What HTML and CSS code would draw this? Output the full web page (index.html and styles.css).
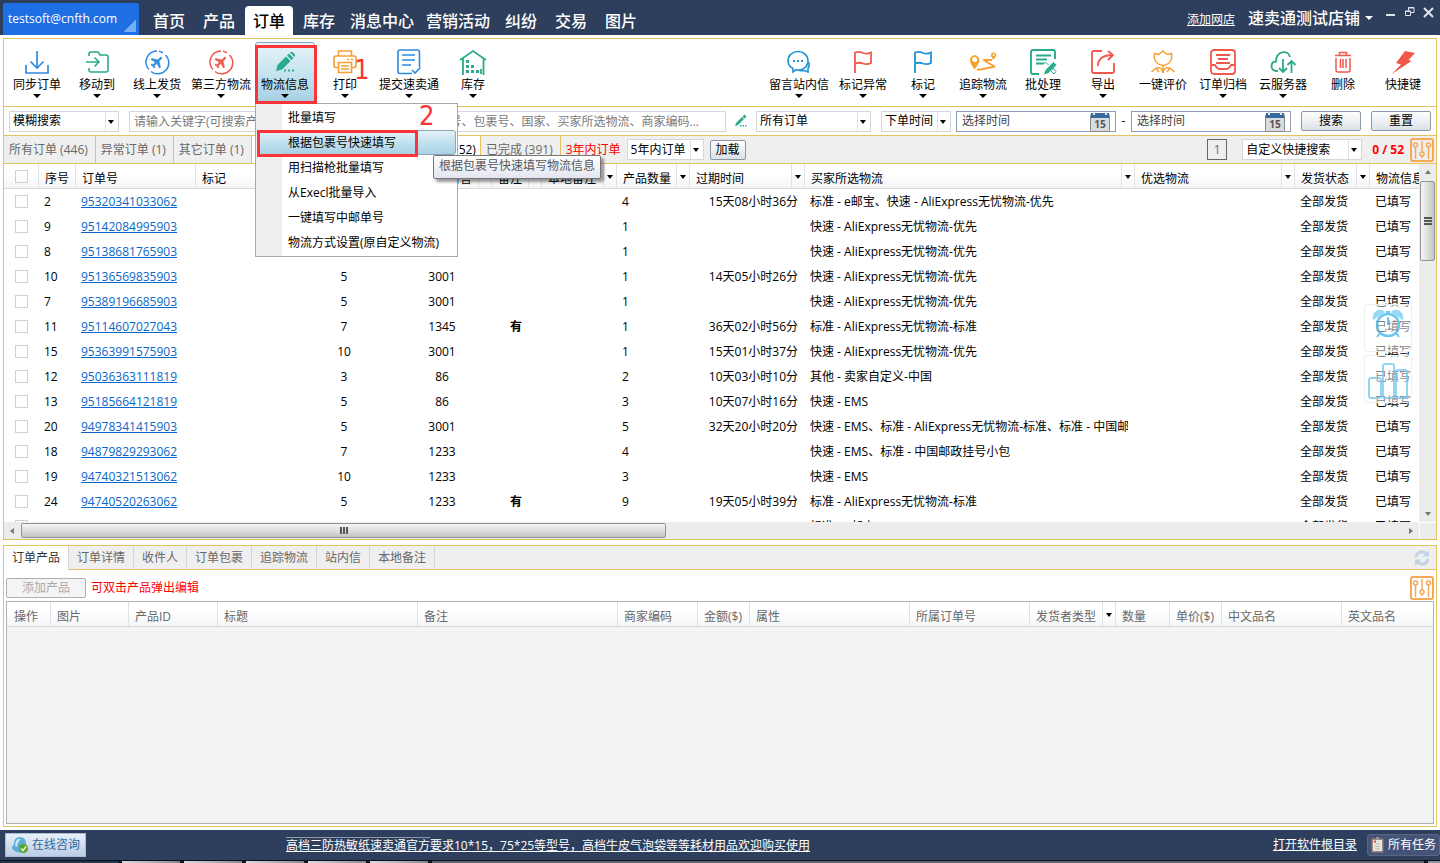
FILE: index.html
```html
<!DOCTYPE html>
<html lang="zh-CN">
<head>
<meta charset="utf-8">
<title>订单管理</title>
<link rel="stylesheet" href="styles.css">
</head>
<body>
<header class="topbar">
  <button class="account">testsoft@cnfth.com</button>
  <nav class="mainnav">
    <a href="#">首页</a><a href="#">产品</a><a href="#" class="active">订单</a><a href="#">库存</a><a href="#">消息中心</a><a href="#">营销活动</a><a href="#">纠纷</a><a href="#">交易</a><a href="#">图片</a>
  </nav>
  <a class="add-shop" href="#">添加网店</a>
  <button class="shop">速卖通测试店铺<i class="tri light"></i></button>
  <div class="winctl">
    <button aria-label="最小化"><svg width="11" height="12" viewBox="0 0 11 12"><path d="M1 9h9" stroke="#dfe3ea" stroke-width="2"/></svg></button>
    <button aria-label="还原"><svg width="11" height="12" viewBox="0 0 11 12" fill="none" stroke="#dfe3ea"><path d="M4.500 5V1.500h5.500v5H7M4 2h6"/><path d="M1.500 5.500h5v4h-5zM1 5h6"/></svg></button>
    <button aria-label="关闭"><svg width="11" height="12" viewBox="0 0 11 12"><path d="M1 2l9 9M10 2l-9 9" stroke="#dfe3ea" stroke-width="2"/></svg></button>
  </div>
</header>

<main class="workspace">
  <section class="panel orders">
    <div class="toolbar">
      <button class="tool"><svg viewBox="0 0 28 28" fill="none" stroke="#2e8be0" stroke-width="2"><path d="M3 17v8h22v-8M14 3v17M7.500 13.500l6.500 6.500 6.500-6.500" stroke-width="1.700"/></svg><span>同步订单</span><i class="tri"></i></button>
      <button class="tool"><svg viewBox="0 0 28 28" fill="none" stroke="#2bab8c" stroke-width="1.600"><path d="M6 8V6q0-2 2-2h7l2 3h6q2 0 2 2v13q0 2-2 2H8q-2 0-2-2v-2M3 14h13M11.500 9.500l4.500 4.500-4.500 4.500"/></svg><span>移动到</span><i class="tri"></i></button>
      <button class="tool"><svg viewBox="0 0 28 28" fill="none" stroke="#2e8be0" stroke-width="1.500"><path d="M14 3a11 11 0 0 0-8 18.500M8 23.500A11 11 0 0 0 22.500 7M16 3.200a11 11 0 0 1 4 1.600"/><path transform="translate(14 14) rotate(45) scale(.64) translate(-11.500 -12)" d="M21 16v-2l-8-5V3.500c0-.83-.67-1.500-1.500-1.500S10 2.670 10 3.500V9l-8 5v2l8-2.500V19l-2 1.500V22l3.500-1 3.500 1v-1.500L13 19v-5.500l8 2.500z" fill="#2e8be0" stroke-width="1"/></svg><span>线上发货</span><i class="tri"></i></button>
      <button class="tool wide"><svg viewBox="0 0 28 28" fill="none" stroke="#f0584b" stroke-width="1.500"><path d="M14 3a11 11 0 0 0-8 18.500M8 23.500A11 11 0 0 0 22.500 7M16 3.200a11 11 0 0 1 4 1.600"/><path transform="translate(14 14) rotate(45) scale(.64) translate(-11.500 -12)" d="M21 16v-2l-8-5V3.500c0-.83-.67-1.500-1.500-1.500S10 2.670 10 3.500V9l-8 5v2l8-2.500V19l-2 1.500V22l3.500-1 3.500 1v-1.500L13 19v-5.500l8 2.500z" fill="#f0584b" stroke-width="1"/></svg><span>第三方物流</span><i class="tri"></i></button>
      <div class="tool-slot">
        <button class="tool pressed"><svg viewBox="0 0 28 28" fill="#2bab8c"><path d="M5 23l1.500-6L15 8.500l4.500 4.500L11 21.500zM16 7.500l2-2 4.500 4.500-2 2zM19 4.500q1.500-1.500 3 0l1.500 1.500q1.500 1.500 0 3z"/><path d="M13 21.500h2v2h-2zM17 21.500h2v2h-2zM21 21.500h2v2h-2z"/></svg><span>物流信息</span><i class="tri"></i></button>
        <div class="mark mark-tool"></div>
        <div class="menu">
          <button>批量填写</button>
          <button class="hot">根据包裹号快速填写</button>
          <button>用扫描枪批量填写</button>
          <button>从Execl批量导入</button>
          <button>一键填写中邮单号</button>
          <button>物流方式设置(原自定义物流)</button>
          <div class="mark mark-item"></div>
          <b class="step step-two">2</b>
          <div class="tip">根据包裹号快速填写物流信息</div>
        </div>
      </div>
      <div class="tool-slot">
        <button class="tool"><svg viewBox="0 0 28 28" fill="none" stroke="#f5a030" stroke-width="1.600"><path d="M7.500 8V3h13v5M7 19.500H5q-2 0-2-2V10q0-2 2-2h18q2 0 2 2v7.500q0 2-2 2h-2M7.500 14.500h13v10h-13zM10 18h8M10 21h8M19.500 11.500h3M16 11.500h2"/></svg><span>打印</span><i class="tri"></i></button>
        <b class="step step-one">1</b>
      </div>
      <button class="tool wide"><svg viewBox="0 0 28 28" fill="none" stroke="#2e8be0" stroke-width="1.600"><path d="M17 25.500H5q-2 0-2-2V4q0-2 2-2h17.500q2 0 2 2v15M7 7h13M7 12h13M7 17h9"/><path d="M17 22l3 3 5.500-5.500"/></svg><span>提交速卖通</span><i class="tri"></i></button>
      <button class="tool"><svg viewBox="0 0 28 28" fill="none" stroke="#2bab8c" stroke-width="1.800"><path d="M1 12L14 3l13 9M4 10v17M24.500 10v17"/><path d="M7 12h3v3H7zM7 17h3v3H7zM7 22h3v3H7zM12 17h3v3h-3zM12 22h3v3h-3zM17 22h3v3h-3z" fill="#2bab8c" stroke="none"/><path d="M22 21v5"/></svg><span>库存</span><i class="tri"></i></button>
      <div class="grow"></div>
      <button class="tool wide"><svg viewBox="0 0 28 28" fill="none" stroke="#1f94d8" stroke-width="1.600"><path d="M8 24v-3.500C4.500 18.500 3 16 3 13 3 7.500 7.500 3.500 13 3.500S23 7.500 23 13s-4.500 9-10 9q-1 0-2-.3z"/><path d="M23.500 14c1.500 3 .5 5-.5 6.500v3.500l-3.500-1.500q-3 .8-6-.5"/><path d="M8 12h2v2H8zM12 12h2v2h-2zM16 12h2v2h-2z" fill="#1f94d8" stroke="none"/></svg><span>留言站内信</span><i class="tri"></i></button>
      <button class="tool"><svg viewBox="0 0 28 28" fill="none" stroke="#f0584b" stroke-width="1.800"><path d="M6 25V4.500q4-1.500 8 .5 4 1.500 8-.5V15q-4 2-8 .5t-8 0"/></svg><span>标记异常</span><i class="tri"></i></button>
      <button class="tool"><svg viewBox="0 0 28 28" fill="none" stroke="#1f94d8" stroke-width="1.800"><path d="M6 25V4.500q4-1.500 8 .5 4 1.500 8-.5V15q-4 2-8 .5t-8 0"/></svg><span>标记</span><i class="tri"></i></button>
      <button class="tool"><svg viewBox="0 0 28 28" fill="#f5a030" fill-rule="evenodd"><path d="M5.500 21.500C2.500 17 1 15 1 12a4.700 4.700 0 0 1 9.400 0c0 3-1.500 5-4.900 9.500zM5.600 9a2.500 2.500 0 1 0 .1 5 2.500 2.500 0 0 0-.1-5z"/><path d="M24.500 12C23 10 22 8.500 22 7a2.600 2.600 0 0 1 5.200 0c0 1.500-1.200 3-2.700 5zM24.600 6a1 1 0 1 0 .1 2 1 1 0 0 0-.1-2z"/><path d="M8 21.500h4l13.500-3-11-6.500H23" fill="none" stroke="#f5a030" stroke-width="1.800" stroke-linejoin="round"/></svg><span>追踪物流</span><i class="tri"></i></button>
      <button class="tool"><svg viewBox="0 0 28 28" fill="none" stroke="#2bab8c" stroke-width="1.900"><path d="M26 11V4q0-2-2-2H4Q2 2 2 4v20q0 2 2 2h6M7 7.500h15M7 11.500h11M7 15.500h8"/><path d="M14.500 16l2-2 3 3M22 21l3 0 2 2.500-2 2.500-3-3" stroke-width="1"/><path d="M15 26.500l1.500-4.500 8-8 3 3-8 8z" fill="#2bab8c" stroke="none"/></svg><span>批处理</span><i class="tri"></i></button>
      <button class="tool"><svg viewBox="0 0 28 28" fill="none" stroke="#f0584b" stroke-width="1.800"><path d="M13 3H5Q3 3 3 5v18q0 2 2 2h18q2 0 2-2v-8M9 18C9 11 14 7 24 7M19 3l5 4-5 5"/></svg><span>导出</span><i class="tri"></i></button>
      <button class="tool"><svg viewBox="0 0 28 28" fill="none" stroke="#f5a030" stroke-width="1.500"><path d="M10 6.500L14 3l4 3.500 4.500-1c1 5-.5 11-8.500 12C6 16.500 4.500 10.500 5.500 5.500zM14 17.500V25M14 25q-1-6-6-5M14 25q1-6 6-5M2.500 24l4.500-4 3 4M25.500 24L21 20l-3 4"/></svg><span>一键评价</span></button>
      <button class="tool"><svg viewBox="0 0 28 28" fill="none" stroke="#f0584b" stroke-width="1.800"><rect x="2" y="2" width="24" height="24" rx="3"/><path d="M7 7h14M9 11h10M7 15h14M2 17h4q2 4 5 4h6q3 0 5-4h4"/></svg><span>订单归档</span><i class="tri"></i></button>
      <button class="tool"><svg viewBox="0 0 28 28" fill="none" stroke="#2bab8c" stroke-width="1.800"><path d="M9 23H7c-6-1-6-9 0-9.500C7 3 19 1 21 9M14 11v13M10 20l4 4 4-4M22.500 25V13M18.500 17l4-4 4 4"/></svg><span>云服务器</span><i class="tri"></i></button>
      <button class="tool"><svg viewBox="0 0 28 28" fill="none" stroke="#f0584b" stroke-width="1.500"><path d="M6 7.500h16M10.500 7V4.500h7V7M7 10v12q0 2 2 2h10q2 0 2-2V10M11.500 11v9M14 11v9M17 11v9"/></svg><span>删除</span></button>
      <button class="tool"><svg viewBox="0 0 28 28" fill="#f0584b"><path d="M16 3l10 2-6.500 7 3 1L3 26l9-9.500-5-1.500z"/></svg><span>快捷键</span></button>
    </div>

    <form class="searchbar">
      <span class="combo w110"><select aria-label="搜索方式"><option>模糊搜索</option></select></span>
      <input class="keyword" type="text" aria-label="关键字" placeholder="请输入关键字(可搜索产品标题、商家编码、订单备注、订单号、包裹号、国家、买家所选物流、商家编码...">
      <button type="button" class="edit" aria-label="编辑"><svg width="14" height="14" viewBox="0 0 14 14" fill="#2bab8c"><path d="M1 12l1-3 6-6 2 2-6 6zM8.500 2.500l2-2 2 2-2 2zM6 11h1.500v1.500H6zM8.500 11H10v1.500H8.500zM11 11h1.500v1.500H11z"/></svg></button>
      <span class="combo w115"><select aria-label="订单范围"><option>所有订单</option></select></span>
      <span class="combo w70"><select aria-label="时间类型"><option>下单时间</option></select></span>
      <span class="date"><input type="text" value="选择时间" aria-label="开始时间"><svg width="20" height="20" viewBox="0 0 20 20"><rect x=".5" y="2.500" width="19" height="17" rx="1" fill="#d9dcdf" stroke="#85898e"/><rect x="1" y="1" width="18" height="5" fill="#37699c"/><path d="M4 0v3M16 0v3" stroke="#d5e6f5" stroke-width="2"/><text x="10" y="16" text-anchor="middle" font-size="10" font-weight="700" fill="#555">15</text></svg></span>
      <span class="dash">-</span>
      <span class="date"><input type="text" value="选择时间" aria-label="结束时间"><svg width="20" height="20" viewBox="0 0 20 20"><rect x=".5" y="2.500" width="19" height="17" rx="1" fill="#d9dcdf" stroke="#85898e"/><rect x="1" y="1" width="18" height="5" fill="#37699c"/><path d="M4 0v3M16 0v3" stroke="#d5e6f5" stroke-width="2"/><text x="10" y="16" text-anchor="middle" font-size="10" font-weight="700" fill="#555">15</text></svg></span>
      <button type="button" class="btn w60">搜索</button>
      <button type="button" class="btn w60">重置</button>
    </form>

    <div class="filters">
      <button class="ftab">所有订单 (446)</button>
      <button class="ftab">异常订单 (1)</button>
      <button class="ftab">其它订单 (1)</button>
      <button class="ftab current">(52)</button>
      <button class="ftab">已完成 (391)</button>
      <span class="within">3年内订单</span>
      <span class="combo w77"><select aria-label="年限"><option>5年内订单</option></select></span>
      <button class="btn load">加载</button>
      <div class="grow"></div>
      <button class="page">1</button>
      <span class="combo w120"><select aria-label="快捷搜索"><option>自定义快捷搜索</option></select></span>
      <span class="count">0 / 52</span>
      <button class="sliders" aria-label="列设置"><svg width="24" height="24" viewBox="0 0 24 24" fill="none" stroke="#f5a957" stroke-width="1.500"><rect x="1" y="1" width="22" height="22" rx="2" stroke-width="2"/><path d="M5.500 9v12M12 3v11M12 18v2M18.500 9v12"/><circle cx="5.500" cy="7" r="2"/><circle cx="12" cy="16" r="2"/><circle cx="18.500" cy="7" r="2"/></svg></button>
    </div>

    <div class="gridwrap">
      <div class="viewport">
        <table class="grid">
          <colgroup><col class="c34"><col class="c37"><col class="c120"><col class="c100"><col class="c98"><col class="c98"><col class="c50"><col class="c75"><col class="c73"><col class="c115"><col class="c330"><col class="c160"><col class="c75"><col></colgroup>
          <thead><tr>
            <th class="ck"><input type="checkbox" aria-label="全选"></th><th><div>序号</div></th><th><div>订单号</div></th><th><div>标记</div></th><th></th><th><div class="end">留言<i class="flt"></i></div></th><th><div>备注<i class="flt"></i></div></th><th><div>本地备注<i class="flt"><i class="tri sm"></i></i></div></th><th><div>产品数量<i class="flt"><i class="tri sm"></i></i></div></th><th><div>过期时间<i class="flt"><i class="tri sm"></i></i></div></th><th><div>买家所选物流<i class="flt"><i class="tri sm"></i></i></div></th><th><div>优选物流<i class="flt"><i class="tri sm"></i></i></div></th><th><div>发货状态<i class="flt"><i class="tri sm"></i></i></div></th><th><div>物流信息</div></th>
          </tr></thead>
          <tbody>
<tr><td class="ck"><input type="checkbox" aria-label="选择"></td><td>2</td><td><a href="#">95320341033062</a></td><td></td><td></td><td></td><td></td><td></td><td>4</td><td class="r">15天08小时36分</td><td>标准 - e邮宝、快速 - AliExpress无忧物流-优先</td><td></td><td>全部发货</td><td>已填写</td></tr>
<tr><td class="ck"><input type="checkbox" aria-label="选择"></td><td>9</td><td><a href="#">95142084995903</a></td><td></td><td></td><td></td><td></td><td></td><td>1</td><td></td><td>快速 - AliExpress无忧物流-优先</td><td></td><td>全部发货</td><td>已填写</td></tr>
<tr><td class="ck"><input type="checkbox" aria-label="选择"></td><td>8</td><td><a href="#">95138681765903</a></td><td></td><td></td><td></td><td></td><td></td><td>1</td><td></td><td>快速 - AliExpress无忧物流-优先</td><td></td><td>全部发货</td><td>已填写</td></tr>
<tr><td class="ck"><input type="checkbox" aria-label="选择"></td><td>10</td><td><a href="#">95136569835903</a></td><td></td><td class="m">5</td><td class="m">3001</td><td></td><td></td><td>1</td><td class="r">14天05小时26分</td><td>快速 - AliExpress无忧物流-优先</td><td></td><td>全部发货</td><td>已填写</td></tr>
<tr><td class="ck"><input type="checkbox" aria-label="选择"></td><td>7</td><td><a href="#">95389196685903</a></td><td></td><td class="m">5</td><td class="m">3001</td><td></td><td></td><td>1</td><td></td><td>快速 - AliExpress无忧物流-优先</td><td></td><td>全部发货</td><td>已填写</td></tr>
<tr><td class="ck"><input type="checkbox" aria-label="选择"></td><td>11</td><td><a href="#">95114607027043</a></td><td></td><td class="m">7</td><td class="m">1345</td><td class="m"><b>有</b></td><td></td><td>1</td><td class="r">36天02小时56分</td><td>标准 - AliExpress无忧物流-标准</td><td></td><td>全部发货</td><td>已填写</td></tr>
<tr><td class="ck"><input type="checkbox" aria-label="选择"></td><td>15</td><td><a href="#">95363991575903</a></td><td></td><td class="m">10</td><td class="m">3001</td><td></td><td></td><td>1</td><td class="r">15天01小时37分</td><td>快速 - AliExpress无忧物流-优先</td><td></td><td>全部发货</td><td>已填写</td></tr>
<tr><td class="ck"><input type="checkbox" aria-label="选择"></td><td>12</td><td><a href="#">95036363111819</a></td><td></td><td class="m">3</td><td class="m">86</td><td></td><td></td><td>2</td><td class="r">10天03小时10分</td><td>其他 - 卖家自定义-中国</td><td></td><td>全部发货</td><td>已填写</td></tr>
<tr><td class="ck"><input type="checkbox" aria-label="选择"></td><td>13</td><td><a href="#">95185664121819</a></td><td></td><td class="m">5</td><td class="m">86</td><td></td><td></td><td>3</td><td class="r">10天07小时16分</td><td>快速 - EMS</td><td></td><td>全部发货</td><td>已填写</td></tr>
<tr><td class="ck"><input type="checkbox" aria-label="选择"></td><td>20</td><td><a href="#">94978341415903</a></td><td></td><td class="m">5</td><td class="m">3001</td><td></td><td></td><td>5</td><td class="r">32天20小时20分</td><td><div class="clip">快速 - EMS、标准 - AliExpress无忧物流-标准、标准 - 中国邮政挂号小包</div></td><td></td><td>全部发货</td><td>已填写</td></tr>
<tr><td class="ck"><input type="checkbox" aria-label="选择"></td><td>18</td><td><a href="#">94879829293062</a></td><td></td><td class="m">7</td><td class="m">1233</td><td></td><td></td><td>4</td><td></td><td>快速 - EMS、标准 - 中国邮政挂号小包</td><td></td><td>全部发货</td><td>已填写</td></tr>
<tr><td class="ck"><input type="checkbox" aria-label="选择"></td><td>19</td><td><a href="#">94740321513062</a></td><td></td><td class="m">10</td><td class="m">1233</td><td></td><td></td><td>3</td><td></td><td>快速 - EMS</td><td></td><td>全部发货</td><td>已填写</td></tr>
<tr><td class="ck"><input type="checkbox" aria-label="选择"></td><td>24</td><td><a href="#">94740520263062</a></td><td></td><td class="m">5</td><td class="m">1233</td><td class="m"><b>有</b></td><td></td><td>9</td><td class="r">19天05小时39分</td><td>标准 - AliExpress无忧物流-标准</td><td></td><td>全部发货</td><td>已填写</td></tr>
<tr><td class="ck"><input type="checkbox" aria-label="选择"></td><td></td><td></td><td></td><td></td><td></td><td></td><td></td><td></td><td></td><td>标准 - e邮宝</td><td></td><td>全部发货</td><td>已填写</td></tr>
          </tbody>
        </table>
        <div class="floats">
          <button aria-label="提醒"><svg width="46" height="46" viewBox="0 0 46 46" fill="none" stroke="#3db3e8" stroke-width="2.500"><path d="M9 13a6 6 0 0 1 9-6zM37 13a6 6 0 0 0-9-6z" fill="#72cdf2" stroke="#72cdf2"/><circle cx="23" cy="20" r="11"/><path d="M23 12v8M21 7h4M15 28l-3 4M31 28l3 4" stroke-width="2"/></svg></button>
          <button aria-label="统计"><svg width="46" height="46" viewBox="0 0 46 46" fill="none" stroke="#72c7ee" stroke-width="2"><rect x="4" y="22" width="12" height="20" rx="2"/><rect x="18" y="8" width="11" height="34" rx="2"/><rect x="31" y="14" width="11" height="28" rx="2"/></svg></button>
        </div>
      </div>
      <div class="vbar"><i class="arr up"></i><div class="vthumb"><i></i><i></i><i></i></div><div class="grow"></div><i class="arr down"></i></div>
      <div class="hbar"><i class="arr left"></i><div class="hthumb"><i></i><i></i><i></i></div><div class="grow"></div><i class="arr right"></i></div>
      <div class="corner"></div>
    </div>
  </section>

  <section class="panel detail">
    <div class="dtabs">
      <button class="current">订单产品</button><button>订单详情</button><button>收件人</button><button>订单包裹</button><button>追踪物流</button><button>站内信</button><button>本地备注</button>
      <div class="grow"></div>
      <svg class="refresh" width="16" height="16" viewBox="0 0 16 16" fill="none" stroke="#c3d3e6" stroke-width="3"><path d="M2 7a6 6 0 0 1 10-3.500M14 9a6 6 0 0 1-10 3.500"/><path d="M15 0v6.500H8.500zM1 16V9.500h6.500z" fill="#c3d3e6" stroke="none"/></svg>
    </div>
    <div class="dtools">
      <button class="btn add" disabled>添加产品</button>
      <span class="hint">可双击产品弹出编辑</span>
      <div class="grow"></div>
      <button class="sliders" aria-label="列设置"><svg width="24" height="24" viewBox="0 0 24 24" fill="none" stroke="#f5a957" stroke-width="1.500"><rect x="1" y="1" width="22" height="22" rx="2" stroke-width="2"/><path d="M5.500 9v12M12 3v11M12 18v2M18.500 9v12"/><circle cx="5.500" cy="7" r="2"/><circle cx="12" cy="16" r="2"/><circle cx="18.500" cy="7" r="2"/></svg></button>
    </div>
    <div class="dgrid">
      <table class="grid muted">
        <colgroup><col class="c43"><col class="c78"><col class="c89"><col class="c200"><col class="c200"><col class="c80"><col class="c52"><col class="c160"><col class="c120"><col class="c86"><col class="c54"><col class="c52"><col class="c120"><col></colgroup>
        <thead><tr><th><div>操作</div></th><th><div>图片</div></th><th><div>产品ID</div></th><th><div>标题</div></th><th><div>备注</div></th><th><div>商家编码</div></th><th><div>金额($)</div></th><th><div>属性</div></th><th><div>所属订单号</div></th><th><div>发货者类型<i class="flt"><i class="tri sm"></i></i></div></th><th><div>数量</div></th><th><div>单价($)</div></th><th><div>中文品名</div></th><th><div>英文品名</div></th></tr></thead>
      </table>
    </div>
  </section>
</main>

<footer class="status">
  <button class="chat"><svg width="18" height="18" viewBox="0 0 18 18"><path d="M2 14Q0 11 3 8q0-7 6-7t6 7q2 3 1 7-7 4-14-1z" fill="#5aaed8"/><path d="M5 5q2-3 5-2-3 2-4 8-3 0-1-6z" fill="#c8e8f5"/><circle cx="12.500" cy="12.500" r="4.500" fill="#5ba22c"/><path d="M10 12.500l2 2 3-4" fill="none" stroke="#e9f7c8" stroke-width="1.500"/></svg>在线咨询</button>
  <a class="notice" href="#">高档三防热敏纸速卖通官方要求10*15，75*25等型号，高档牛皮气泡袋等等耗材用品欢迎购买使用</a>
  <div class="grow"></div>
  <a class="root" href="#">打开软件根目录</a>
  <button class="tasks"><svg width="13" height="16" viewBox="0 0 13 16"><rect x=".5" y="1.500" width="12" height="14" rx="1" fill="#9b8375"/><path d="M2 3h9v11H2z" fill="#e9e7e4"/><path d="M5 0h3v3H5z" fill="#8f939b"/><path d="M4 7h5M4 9.500h5M4 12h5" stroke="#b5b5b5"/><path d="M3 3.500h2v2H3z" fill="#d14b3c"/></svg>所有任务</button>
</footer>
<div class="edge"><i class="start"></i><i></i><i></i><i></i><i></i><i></i><i class="rest"></i><i class="last"></i></div>
</body>
</html>
```
FILE: styles.css
```css
* { box-sizing: border-box; }

body {
  margin: 0;
  min-height: 100vh;
  display: flex;
  flex-direction: column;
  background: #fff;
  color: #000;
  font: 12px/16px "Open Sans", "Noto Sans CJK SC", sans-serif;
}

button, input, select {
  margin: 0;
  padding: 0;
  border: 0;
  background: none;
  color: inherit;
  font: inherit;
}

a { color: inherit; }
button, a, th, td { white-space: nowrap; }
.grow { flex: 1; }

.tri {
  display: block;
  width: 0;
  border: 4px solid transparent;
  border-top-color: #000;
  border-bottom: 0;
}
.tri.light { border-top-color: #fff; border-width: 4px 4px 0; }
.tri.sm { border-width: 4px 3px 0; }

/* top bar */
.topbar {
  display: flex;
  height: 35px;
  padding-left: 3px;
  background: #2e3f5e;
  color: #fff;
}
.account {
  width: 136px;
  margin-top: 3px;
  padding-left: 5px;
  text-align: left;
  border-radius: 2px 2px 0 0;
  background:
    linear-gradient(135deg, transparent 50%, #77adf5 50%) right 3px bottom 3px / 12px 12px no-repeat,
    #1e6fe3;
}
.mainnav {
  display: flex;
  flex: 1;
  margin-left: 5px;
  padding-top: 6px;
  font-size: 16px;
  font-weight: 500;
}
.mainnav a {
  min-width: 48px;
  height: 29px;
  margin: 0 1px;
  padding: 0 5px;
  line-height: 30px;
  text-align: center;
  text-decoration: none;
  border-radius: 4px 4px 0 0;
}
.mainnav .active { background: #fff; color: #000; }
.add-shop { margin-right: 13px; line-height: 40px; }
.shop {
  display: flex;
  align-items: center;
  gap: 5px;
  font-size: 16px;
  font-weight: 500;
}
.winctl { display: flex; align-items: flex-start; gap: 8px; padding: 6px 6px 0 12px; }
.winctl svg { display: block; }

/* panels */
.workspace {
  flex: 1;
  display: flex;
  flex-direction: column;
  gap: 5px;
  padding: 3px;
}
.panel { border: 1px solid #e6c25e; }

/* toolbar */
.toolbar {
  display: flex;
  height: 68px;
  padding: 3px;
  border-bottom: 1px solid #e6c25e;
}
.tool {
  display: flex;
  flex-direction: column;
  align-items: center;
  width: 60px;
  height: 61px;
  padding-top: 5px;
  border: 1px solid transparent;
}
.tool.wide { width: 68px; }
.tool svg { width: 28px; height: 28px; margin-bottom: 1px; }
.tool .tri { margin-top: 1px; }
.tool-slot { position: relative; z-index: 2; }
.tool.pressed {
  border-color: #8aa4b8;
  border-radius: 3px;
  background: linear-gradient(#e6f3f9, #c7e4f0 50%, #a5d0e3);
}
.mark { position: absolute; border: 3px solid #fb3438; pointer-events: none; }
.mark-tool { z-index: 2; left: 0; top: 3px; width: 62px; height: 59px; }
.mark-item { left: 1px; top: 26px; width: 161px; height: 27px; }
.step {
  position: absolute;
  color: #fb3438;
  font: 27px/28px "DejaVu Sans Condensed", "DejaVu Sans", sans-serif;
}
.step-one { left: 39px; top: 14px; z-index: 3; }
.step-two { left: 163px; top: -2px; }

.menu {
  position: absolute;
  left: 0;
  top: 61px;
  width: 203px;
  padding: 1px;
  border: 1px solid #a9a9a9;
  background: linear-gradient(90deg, #eee 26px, #fff 26px);
}
.menu button {
  display: block;
  width: 199px;
  height: 25px;
  padding-left: 30px;
  text-align: left;
  border: 1px solid transparent;
}
.menu .hot {
  border-color: #8ba5b7;
  border-radius: 3px;
  background: linear-gradient(#e4f2f8, #c2e1ee 50%, #a8d2e5);
}
.tip {
  position: absolute;
  left: 177px;
  top: 51px;
  padding: 2px 5px 4px;
  color: #575757;
  white-space: nowrap;
  border: 1px solid #767676;
  border-radius: 2px;
  background: linear-gradient(#fff, #e4e5f0);
  box-shadow: 3px 3px 3px rgba(0, 0, 0, .4);
}

/* search row */
.searchbar {
  display: flex;
  align-items: center;
  height: 29px;
  padding: 0 5px;
  border-bottom: 1px solid #e6c25e;
}
.combo {
  position: relative;
  flex: none;
  height: 21px;
  border: 1px solid #d4d8de;
  background: #fff;
}
.combo select {
  appearance: none;
  display: block;
  width: 100%;
  height: 19px;
  padding-left: 3px;
}
.combo::before {
  content: "";
  position: absolute;
  right: 12px;
  top: 0;
  height: 19px;
  border-left: 1px solid #dde1e6;
}
.combo::after {
  content: "";
  position: absolute;
  right: 4px;
  top: 8px;
  border: 3px solid transparent;
  border-top: 4px solid #000;
  border-bottom: 0;
}
.w60 { width: 60px; }
.w70 { width: 70px; margin-left: 10px; }
.w77 { width: 77px; }
.w110 { width: 110px; }
.w115 { width: 115px; margin-left: 8px; }
.w120 { width: 120px; margin-left: 15px; }
.keyword {
  flex: 1;
  min-width: 0;
  height: 21px;
  margin-left: 10px;
  padding: 0 4px;
  border: 1px solid #d4d8de;
}
.keyword::placeholder { color: #7a7a7a; }
.edit { margin-left: 8px; }
.edit svg { display: block; }
.date {
  display: flex;
  flex: none;
  width: 160px;
  height: 21px;
  padding-right: 5px;
  border: 1px solid #8e9db0;
}
.date input { flex: 1; min-width: 0; padding-left: 5px; color: #444; }
.w70 + .date { margin-left: 5px; }
.dash { width: 15px; text-align: center; }
.btn {
  height: 20px;
  border: 1px solid #8b97a3;
  border-radius: 2px;
  background: linear-gradient(#fefefe, #edf0f3 50%, #dbe1e7);
}
.searchbar .btn { margin-left: 10px; }

/* order filters */
.filters {
  display: flex;
  align-items: center;
  height: 28px;
  background: #efefef;
  border-bottom: 1px solid #e6c25e;
}
.ftab {
  height: 27px;
  padding: 0 7px 0 5px;
  color: #686868;
  border-right: 1px solid #e6c25e;
}
.ftab.current {
  width: 229px;
  padding-right: 4px;
  color: #000;
  text-align: right;
  background: #fff;
}
.within { padding: 0 6px 0 5px; color: #f00; }
.load { width: 36px; margin-left: 6px; }
.page {
  width: 20px;
  height: 21px;
  color: #686868;
  border: 1px solid #666;
}
.count { margin: 0 6px 0 10px; color: #f00; font-weight: 700; }
.sliders { margin-right: 2px; }
.sliders svg { display: block; }

/* grid */
.gridwrap {
  display: grid;
  grid-template-columns: minmax(0, 1fr) 17px;
  grid-template-rows: 358px 17px;
}
.viewport { position: relative; overflow: hidden; }
.grid {
  width: 100%;
  table-layout: fixed;
  border-collapse: separate;
  border-spacing: 0;
}
.grid th, .grid td {
  height: 25px;
  padding: 0 6px;
  overflow: hidden;
  text-align: left;
}
.grid th {
  padding: 0;
  font-weight: 400;
  background: linear-gradient(#fff 40%, #f3f5f8);
  border-bottom: 1px solid #d6d8dc;
}
.grid th > div {
  display: flex;
  justify-content: space-between;
  height: 24px;
  padding-left: 6px;
  line-height: 30px;
  border-left: 1px solid #dfe2e6;
}
.grid.muted th:first-child > div { border-left-color: transparent; }
.grid th > .end { justify-content: flex-end; }
.grid th > .end .flt { margin-left: 6px; }
.flt {
  display: flex;
  justify-content: center;
  width: 13px;
  padding-top: 11px;
  border-left: 1px solid #dfe2e6;
}
.grid a { color: #0a66c8; }
.grid .m { text-align: center; }
.grid .r { text-align: right; }
.grid .ck { padding: 0 0 0 11px; }
.clip { overflow: hidden; }
.ck input {
  appearance: none;
  display: block;
  width: 13px;
  height: 13px;
  border: 1px solid #cdd0d5;
}
.c34 { width: 34px; } .c37 { width: 37px; } .c43 { width: 43px; } .c50 { width: 50px; }
.c52 { width: 52px; } .c54 { width: 54px; } .c73 { width: 73px; } .c75 { width: 75px; }
.c78 { width: 78px; } .c80 { width: 80px; } .c86 { width: 86px; } .c89 { width: 89px; }
.c98 { width: 98px; } .c100 { width: 100px; } .c115 { width: 115px; } .c120 { width: 120px; }
.c160 { width: 160px; } .c200 { width: 200px; } .c330 { width: 330px; }

.floats {
  position: absolute;
  right: 7px;
  top: 140px;
  display: grid;
  gap: 3px;
}
.floats button {
  width: 48px;
  height: 48px;
  border: 1px solid #eee;
  border-radius: 3px;
  background: rgba(255, 255, 255, .5);
}
.floats svg { display: block; opacity: .75; }

/* scroll bars */
.vbar, .hbar, .corner { background: #ececec; }
.vbar { display: flex; flex-direction: column; align-items: center; padding: 6px 0; }
.hbar { display: flex; align-items: center; padding: 0 6px; }
.corner { border-left: 1px solid #fff; border-top: 1px solid #fff; }
.arr { border: 3px solid transparent; }
.up { border-top: 0; border-bottom: 4px solid #777; }
.down { border-bottom: 0; border-top: 4px solid #777; }
.left { border-left: 0; border-right: 4px solid #777; }
.right { border-right: 0; border-left: 4px solid #777; }
.vthumb, .hthumb {
  display: flex;
  align-items: center;
  justify-content: center;
  gap: 1px;
  border: 1px solid #949494;
  border-radius: 2px;
}
.vthumb {
  flex-direction: column;
  width: 15px;
  height: 80px;
  margin-top: 7px;
  background: linear-gradient(90deg, #f5f5f5, #dedede 50%, #c4c4c4);
}
.vthumb i { width: 8px; height: 2px; background: #555; }
.hthumb {
  width: 46%;
  height: 15px;
  margin-left: 7px;
  background: linear-gradient(#f5f5f5, #dedede 50%, #c4c4c4);
}
.hthumb i { width: 2px; height: 7px; background: #555; }

/* detail panel */
.detail { flex: 1; display: flex; flex-direction: column; }
.dtabs {
  display: flex;
  align-items: center;
  height: 24px;
  background: linear-gradient(#e6c25e, #e6c25e) bottom / 100% 1px no-repeat, #efefef;
}
.dtabs button {
  height: 23px;
  margin-bottom: 1px;
  padding: 0 8px;
  color: #686868;
  border-right: 1px solid #d5d5d5;
}
.dtabs .current {
  height: 24px;
  margin: 0;
  color: #333;
  background: #fff;
}
.refresh { margin-right: 6px; }
.dtools { display: flex; align-items: center; height: 31px; padding: 4px 0 0 2px; }
.add { width: 80px; color: #aaa; background: #f4f4f4; border-color: #aab0b5; }
.hint { margin-left: 5px; color: #f00; }
.dgrid {
  flex: 1;
  margin: 0 2px 2px;
  border: 1px solid #adb2b5;
  background: #f3f3f3;
}
.muted { color: #686868; }

/* status bar */
.status {
  display: flex;
  align-items: center;
  height: 30px;
  padding-left: 5px;
  background: #2e3f5e;
  color: #fff;
}
.chat {
  display: flex;
  align-items: center;
  gap: 3px;
  width: 81px;
  height: 24px;
  padding-left: 5px;
  color: #2d6a9d;
  border: 1px solid #a9bbd6;
  background: linear-gradient(#e9eff8, #bccde6);
}
.notice {
  margin-left: 200px;
  border-top: 1px solid;
  border-image: linear-gradient(90deg, #9099aa 144px, transparent 144px) 1;
}
.tasks {
  display: flex;
  align-items: center;
  gap: 4px;
  height: 22px;
  margin-left: 10px;
  padding: 0 3px;
  border: 1px solid #5a6680;
  border-radius: 3px;
  background: #435478;
}
.edge { display: flex; gap: 4px; height: 3px; background: #111722; border-top: 1px solid #0c1119; }
.edge i { width: 58px; height: 2px; background: linear-gradient(90deg, #d8dbe0, #83898f); }
.edge .start { width: 118px; background: #26384b; }
.edge .rest { flex: 1; background: #5c6470; }
.edge .last { width: 12px; background: #8c929b; }
```
